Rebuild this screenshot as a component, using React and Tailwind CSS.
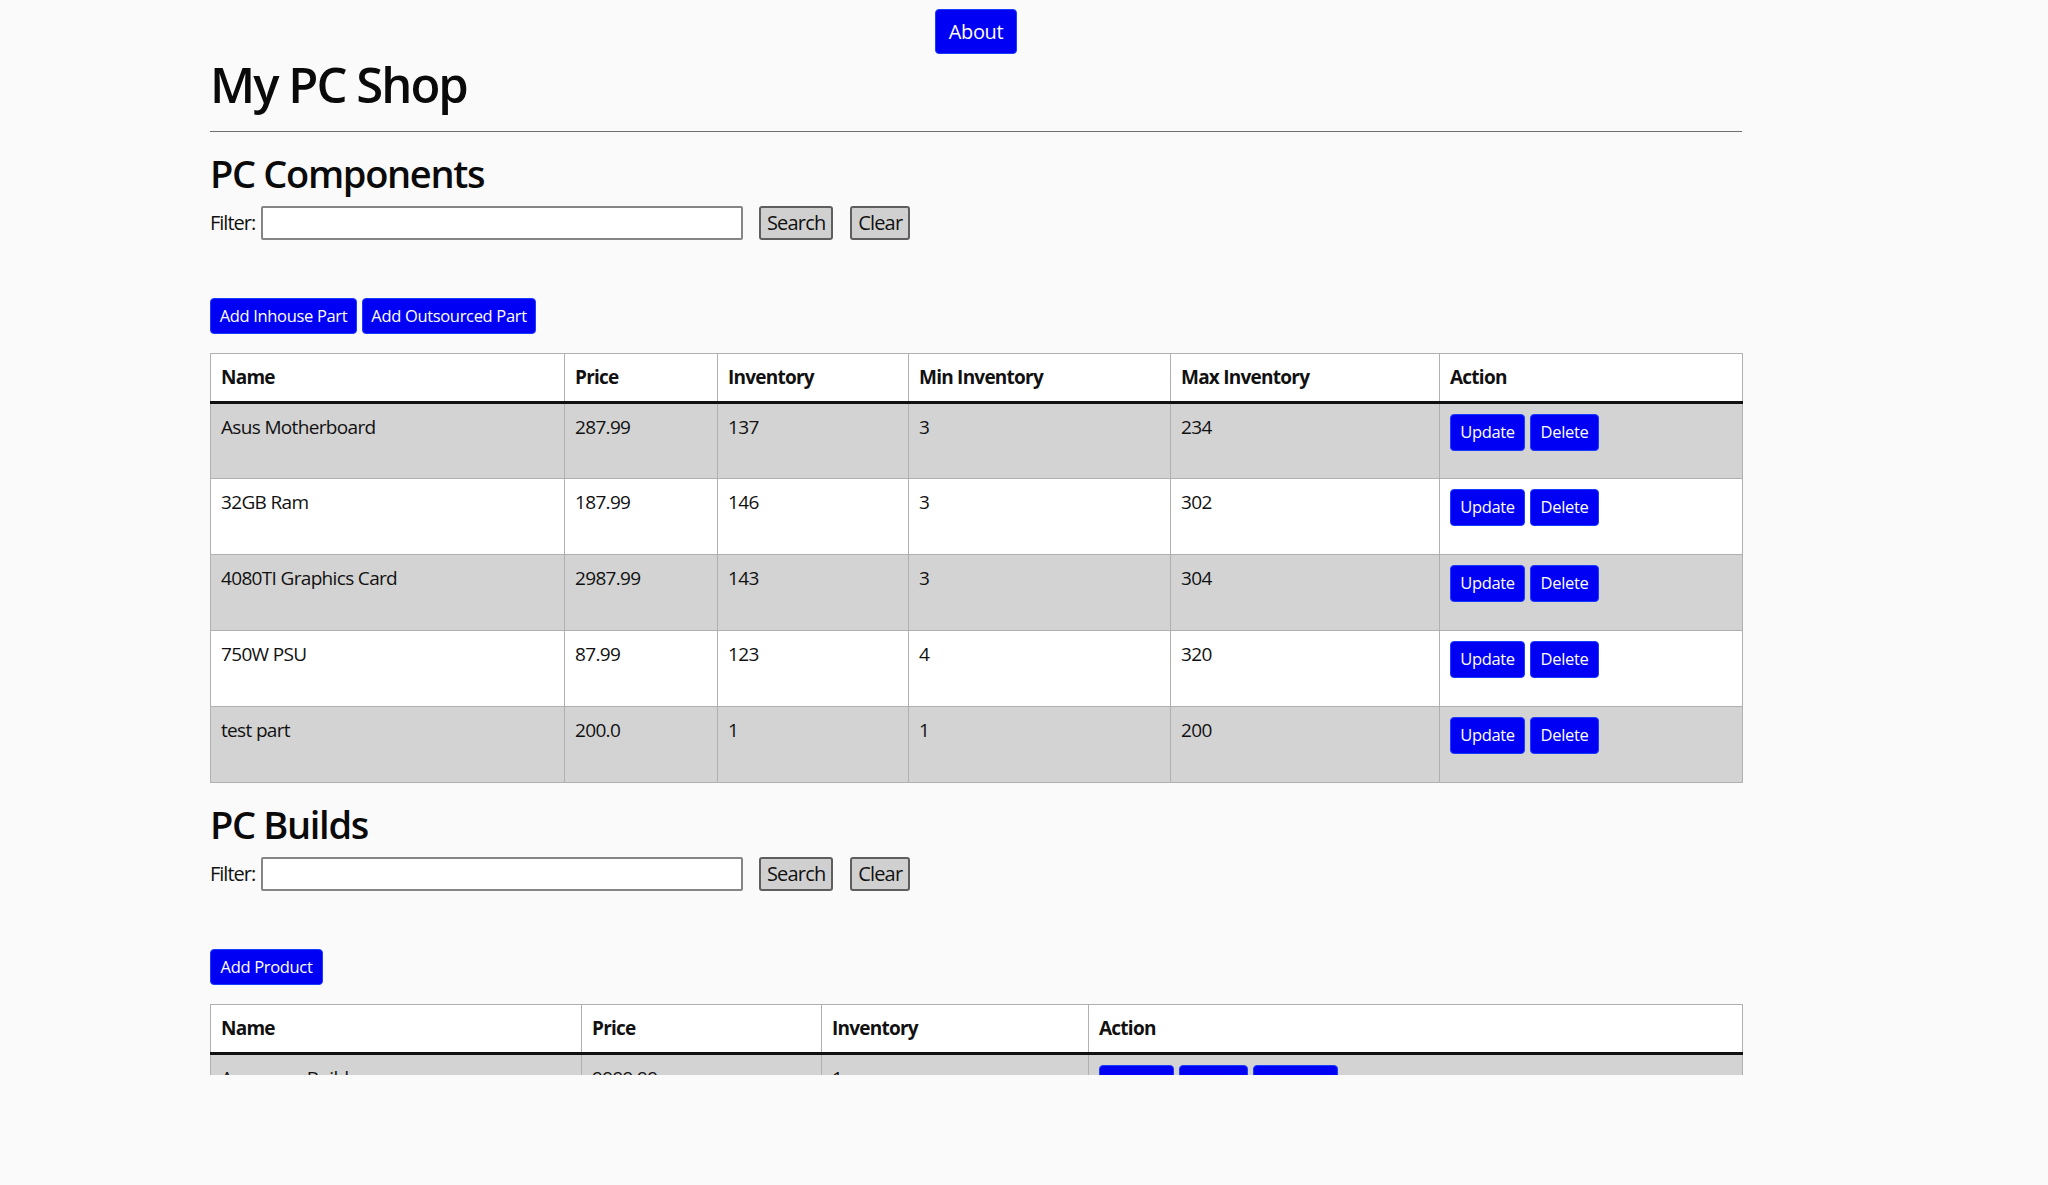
import React from "react";

const parts = [
  ["Asus Motherboard", "287.99", "137", "3", "234"],
  ["32GB Ram", "187.99", "146", "3", "302"],
  ["4080TI Graphics Card", "2987.99", "143", "3", "304"],
  ["750W PSU", "87.99", "123", "4", "320"],
  ["test part", "200.0", "1", "1", "200"],
];

const products = [["Awesome Build", "9999.99", "1"]];

function BlueBtn({ children, w, h = "h-[37px]", text = "text-[16.5px]" }) {
  return (
    <button
      className={`${w} ${h} ${text} shrink-0 rounded-[4px] bg-[#0000f5] text-white border border-[#1a3cff] flex items-center justify-center leading-none tracking-[-0.02em]`}
    >
      {children}
    </button>
  );
}

function FilterRow() {
  return (
    <div className="mt-[9px] h-[34px] flex items-center">
      <span className="text-[20px] tracking-[-0.05em] text-[#111]">Filter:</span>
      <input
        className="ml-[6px] w-[482px] h-[34px] bg-white border-2 border-[#858585] rounded-[2px] outline-none"
        type="text"
      />
      <button className="ml-[16px] w-[74px] h-[34px] bg-[#d0d0d0] border-2 border-[#5e5e5e] rounded-[3px] text-[20px] tracking-[-0.04em] text-[#111] flex items-center justify-center leading-none">
        Search
      </button>
      <button className="ml-[17px] w-[60px] h-[34px] bg-[#d0d0d0] border-2 border-[#5e5e5e] rounded-[3px] text-[20px] tracking-[-0.04em] text-[#111] flex items-center justify-center leading-none">
        Clear
      </button>
    </div>
  );
}

function H2({ children }) {
  return (
    <h2 className="mt-[17px] text-[38px] leading-[48px] font-semibold text-[#0a0a0a] tracking-[-0.035em]">
      {children}
    </h2>
  );
}

export default function App() {
  return (
    <div className="w-[2048px] h-[1185px] bg-[#fafafa] font-['Open_Sans',sans-serif] text-[#212529]">
      <div className="h-[1075px] overflow-hidden">
        <div className="ml-[210px] w-[1532px]">
          <div className="pt-[9px] flex justify-center">
            <BlueBtn w="w-[82px]" h="h-[45px]" text="text-[20px]">
              About
            </BlueBtn>
          </div>
          <h1 className="text-[49px] leading-[60px] font-semibold text-[#0a0a0a] tracking-[-0.04em]">
            My PC Shop
          </h1>
          <div className="mt-[17px] h-[1px] bg-[#6e6e6e]" />

          <H2>PC Components</H2>
          <FilterRow />
          <div className="mt-[58px] flex gap-[5px]">
            <BlueBtn w="w-[147px]" h="h-[36px]">Add Inhouse Part</BlueBtn>
            <BlueBtn w="w-[174px]" h="h-[36px]">Add Outsourced Part</BlueBtn>
          </div>

          <table className="mt-[19px] w-[1532px] table-fixed border-collapse text-[19px] tracking-[-0.035em]">
            <colgroup>
              <col className="w-[354px]" />
              <col className="w-[153px]" />
              <col className="w-[191px]" />
              <col className="w-[262px]" />
              <col className="w-[269px]" />
              <col className="w-[303px]" />
            </colgroup>
            <thead>
              <tr className="bg-white h-[49px]">
                {["Name", "Price", "Inventory", "Min Inventory", "Max Inventory", "Action"].map((h) => (
                  <th
                    key={h}
                    className="border border-[#b0b0b0] border-b-[3px] border-b-[#111] px-[10px] py-0 text-left font-bold text-[#111] tracking-[-0.04em]"
                  >
                    {h}
                  </th>
                ))}
              </tr>
            </thead>
            <tbody>
              {parts.map((r, i) => (
                <tr key={r[0]} className={`h-[76px] ${i % 2 === 0 ? "bg-[#d3d3d3]" : "bg-white"}`}>
                  {r.map((c, j) => (
                    <td
                      key={j}
                      className="border border-[#b0b0b0] align-top px-[10px] pt-[9px] text-[#111]"
                    >
                      {c}
                    </td>
                  ))}
                  <td className="border border-[#b0b0b0] align-top pl-[10px] pt-[10px]">
                    <div className="flex gap-[5px]">
                      <BlueBtn w="w-[75px]">Update</BlueBtn>
                      <BlueBtn w="w-[69px]">Delete</BlueBtn>
                    </div>
                  </td>
                </tr>
              ))}
            </tbody>
          </table>

          <H2>PC Builds</H2>
          <FilterRow />
          <div className="mt-[58px] flex gap-[5px]">
            <BlueBtn w="w-[113px]" h="h-[36px]">Add Product</BlueBtn>
          </div>

          <table className="mt-[19px] w-[1532px] table-fixed border-collapse text-[19px] tracking-[-0.035em]">
            <colgroup>
              <col className="w-[371px]" />
              <col className="w-[240px]" />
              <col className="w-[267px]" />
              <col className="w-[654px]" />
            </colgroup>
            <thead>
              <tr className="bg-white h-[49px]">
                {["Name", "Price", "Inventory", "Action"].map((h) => (
                  <th
                    key={h}
                    className="border border-[#b0b0b0] border-b-[3px] border-b-[#111] px-[10px] py-0 text-left font-bold text-[#111] tracking-[-0.04em]"
                  >
                    {h}
                  </th>
                ))}
              </tr>
            </thead>
            <tbody>
              {products.map((r) => (
                <tr key={r[0]} className="h-[76px] bg-[#d3d3d3]">
                  {r.map((c, j) => (
                    <td
                      key={j}
                      className="border border-[#b0b0b0] align-top px-[10px] pt-[9px] text-[#111]"
                    >
                      {c}
                    </td>
                  ))}
                  <td className="border border-[#b0b0b0] align-top pl-[10px] pt-[10px]">
                    <div className="flex gap-[5px]">
                      <BlueBtn w="w-[75px]">Update</BlueBtn>
                      <BlueBtn w="w-[69px]">Delete</BlueBtn>
                      <BlueBtn w="w-[85px]">Buy Now</BlueBtn>
                    </div>
                  </td>
                </tr>
              ))}
            </tbody>
          </table>
        </div>
      </div>
    </div>
  );
}
